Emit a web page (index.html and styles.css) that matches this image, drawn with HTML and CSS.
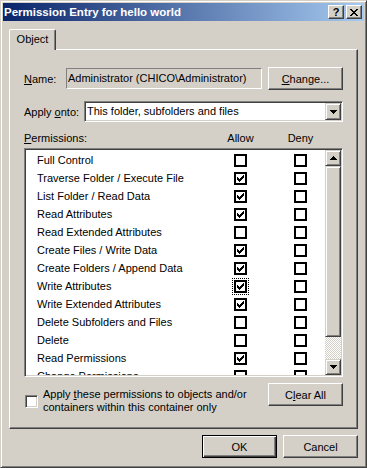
FILE: index.html
```html
<!DOCTYPE html>
<html lang="en">
<head>
  <meta charset="UTF-8">
  <title>Permission Entry for hello world</title>
  <link rel="stylesheet" href="styles.css">
</head>
<body>
  <div class="window">
    <div class="titlebar">
      <span class="title">Permission Entry for hello world</span>
      <span class="tbtn help">?</span>
      <span class="tbtn close">
        <svg width="8" height="7" viewBox="0 0 8 7" shape-rendering="crispEdges"><path d="M0 0h2v1h-2z M6 0h2v1h-2z M1 1h2v1h-2z M5 1h2v1h-2z M2 2h4v1h-4z M3 3h2v1h-2z M2 4h4v1h-4z M1 5h2v1h-2z M5 5h2v1h-2z M0 6h2v1h-2z M6 6h2v1h-2z" fill="#000"/></svg>
      </span>
    </div>

    <div class="tabs"><span class="tab">Object</span></div>

    <div class="panel">
      <div class="row name-row">
        <span class="lbl"><u>N</u>ame:</span>
        <div class="field">Administrator (CHICO\Administrator)</div>
        <button class="btn"><u>C</u>hange...</button>
      </div>

      <div class="row apply-row">
        <span class="lbl">Apply <u>o</u>nto:</span>
        <div class="select">
          <span class="value">This folder, subfolders and files</span>
          <span class="arrow-btn">
            <svg width="7" height="4" viewBox="0 0 7 4" shape-rendering="crispEdges"><path d="M0 0h7v1h-7z M1 1h5v1h-5z M2 2h3v1h-3z M3 3h1v1h-1z" fill="#000"/></svg>
          </span>
        </div>
      </div>

      <div class="perm-head">
        <span class="lbl"><u>P</u>ermissions:</span>
        <span class="col">Allow</span>
        <span class="col">Deny</span>
      </div>

      <div class="listbox">
        <div class="rows">
          <div class="perm"><span class="name">Full Control</span><span class="chk"></span><span class="chk"></span></div>
          <div class="perm"><span class="name">Traverse Folder / Execute File</span><span class="chk on"></span><span class="chk"></span></div>
          <div class="perm"><span class="name">List Folder / Read Data</span><span class="chk on"></span><span class="chk"></span></div>
          <div class="perm"><span class="name">Read Attributes</span><span class="chk on"></span><span class="chk"></span></div>
          <div class="perm"><span class="name">Read Extended Attributes</span><span class="chk"></span><span class="chk"></span></div>
          <div class="perm"><span class="name">Create Files / Write Data</span><span class="chk on"></span><span class="chk"></span></div>
          <div class="perm"><span class="name">Create Folders / Append Data</span><span class="chk on"></span><span class="chk"></span></div>
          <div class="perm"><span class="name">Write Attributes</span><span class="chk on focus"></span><span class="chk"></span></div>
          <div class="perm"><span class="name">Write Extended Attributes</span><span class="chk on"></span><span class="chk"></span></div>
          <div class="perm"><span class="name">Delete Subfolders and Files</span><span class="chk"></span><span class="chk"></span></div>
          <div class="perm"><span class="name">Delete</span><span class="chk"></span><span class="chk"></span></div>
          <div class="perm"><span class="name">Read Permissions</span><span class="chk on"></span><span class="chk"></span></div>
          <div class="perm"><span class="name">Change Permissions</span><span class="chk"></span><span class="chk"></span></div>
        </div>
        <div class="scrollbar">
          <span class="arrow-btn sb-btn">
            <svg width="7" height="4" viewBox="0 0 7 4" shape-rendering="crispEdges"><path d="M3 0h1v1h-1z M2 1h3v1h-3z M1 2h5v1h-5z M0 3h7v1h-7z" fill="#000"/></svg>
          </span>
          <span class="thumb"></span>
          <span class="track"></span>
          <span class="arrow-btn sb-btn">
            <svg width="7" height="4" viewBox="0 0 7 4" shape-rendering="crispEdges"><path d="M0 0h7v1h-7z M1 1h5v1h-5z M2 2h3v1h-3z M3 3h1v1h-1z" fill="#000"/></svg>
          </span>
        </div>
      </div>

      <div class="bottom-row">
        <div class="apply-child">
          <span class="box"></span>
          <span class="text">Apply <u>t</u>hese permissions to objects and/or<br>containers within this container only</span>
        </div>
        <button class="btn">C<u>l</u>ear All</button>
      </div>
    </div>

    <div class="actions">
      <button class="btn default">OK</button>
      <button class="btn">Cancel</button>
    </div>
  </div>
</body>
</html>
```

FILE: styles.css
```css
body {
  margin: 0;
  font-family: 'Liberation Sans', Arial, sans-serif;
  font-size: 11px;
  color: #000;
  background: #d4d0c8;
}
u { text-decoration-thickness: 1px; text-underline-offset: 1px; }

.window {
  box-sizing: border-box;
  width: 367px;
  height: 468px;
  padding: 2px;
  background: #d4d0c8;
  border: 1px solid;
  border-color: #d4d0c8 #404040 #404040 #d4d0c8;
  box-shadow: inset 1px 1px #fff, inset -1px -1px #808080;
}

/* title bar */
.titlebar {
  display: flex;
  align-items: center;
  height: 18px;
  padding: 0 2px 0 1px;
  background: linear-gradient(to right, #0a246a, #a6caf0);
  color: #fff;
}
.title { flex: 1; font-weight: bold; font-size: 11.5px; white-space: nowrap; }
.tbtn {
  box-sizing: border-box;
  display: flex;
  align-items: center;
  justify-content: center;
  width: 16px;
  height: 14px;
  background: #d4d0c8;
  color: #000;
  font-weight: bold;
  font-size: 11px;
  border: 1px solid;
  border-color: #fff #404040 #404040 #fff;
  box-shadow: inset -1px -1px #808080;
}
.tbtn + .tbtn { margin-left: 2px; }
.close svg { margin-left: 0; }

/* tab */
.tabs { display: flex; margin: 8px 0 0 6px; }
.tab {
  position: relative;
  z-index: 1;
  box-sizing: border-box;
  width: 47px;
  height: 21px;
  margin-bottom: -1px;
  padding-top: 3px;
  line-height: 13px;
  text-align: center;
  background: #d4d0c8;
  border: 1px solid;
  border-bottom: none;
  border-color: #fff #404040 #404040 #fff;
  border-radius: 2px 2px 0 0;
  box-shadow: inset -1px 0 #808080;
}

.panel {
  box-sizing: border-box;
  width: 349px;
  height: 380px;
  margin-left: 6px;
  padding: 17px 14px 0;
  border: 1px solid;
  border-color: #fff #404040 #404040 #fff;
  box-shadow: inset -1px -1px #808080;
}

.row { display: flex; align-items: center; }
.lbl { flex: none; white-space: nowrap; }
.name-row { height: 23px; }
.name-row .lbl { width: 42px; }
.apply-row { height: 21px; margin-top: 11px; }
.apply-row .lbl { width: 60px; }

.field {
  box-sizing: border-box;
  width: 196px;
  height: 21px;
  padding: 0 1px;
  line-height: 19px;
  white-space: nowrap;
  overflow: hidden;
  border: 1px solid;
  border-color: #808080 #fff #fff #808080;
}

.btn {
  box-sizing: border-box;
  flex: none;
  width: 75px;
  height: 23px;
  padding: 0;
  font: inherit;
  color: #000;
  background: #d4d0c8;
  border: 1px solid;
  border-color: #fff #404040 #404040 #fff;
  box-shadow: inset -1px -1px #808080;
}
.name-row .btn { margin-left: 6px; }
.btn.default {
  border-color: #000;
  box-shadow: inset 1px 1px #fff, inset -1px -1px #404040, inset -2px -2px #808080;
}

.select {
  box-sizing: border-box;
  display: flex;
  width: 259px;
  height: 21px;
  padding: 1px;
  background: #fff;
  border: 1px solid;
  border-color: #808080 #fff #fff #808080;
  box-shadow: inset 1px 1px #404040, inset -1px -1px #d4d0c8;
}
.select .value { flex: 1; padding-left: 1px; line-height: 17px; white-space: nowrap; }

.arrow-btn {
  box-sizing: border-box;
  display: flex;
  align-items: center;
  justify-content: center;
  width: 16px;
  height: 17px;
  background: #d4d0c8;
  border: 1px solid;
  border-color: #d4d0c8 #404040 #404040 #d4d0c8;
  box-shadow: inset 1px 1px #fff, inset -1px -1px #808080;
}

/* permissions list */
.perm-head { display: flex; margin-top: 10px; line-height: 13px; }
.perm-head .lbl { width: 194px; }
.col { width: 45px; text-align: center; }
.col + .col { margin-left: 15px; }

.listbox {
  box-sizing: border-box;
  display: flex;
  height: 229px;
  margin-top: 3px;
  padding: 1px;
  background: #fff;
  border: 1px solid;
  border-color: #808080 #fff #fff #808080;
  box-shadow: inset 1px 1px #404040, inset -1px -1px #d4d0c8;
}
.rows { flex: 1; overflow: hidden; padding-top: 1px; }
.perm { display: flex; align-items: center; height: 18px; }
.perm .name { flex: none; width: 197px; padding-left: 11px; white-space: nowrap; }
.chk {
  box-sizing: border-box;
  flex: none;
  width: 13px;
  height: 13px;
  background: #fff;
  border: 2px solid #000;
}
.chk + .chk { margin-left: 47px; }
.chk.on {
  background: #fff url("data:image/svg+xml,%3Csvg xmlns='http://www.w3.org/2000/svg' width='9' height='9' shape-rendering='crispEdges'%3E%3Cpath d='M7 1h1v1h-1z M6 2h2v1h-2z M1 3h1v1h-1z M5 3h3v1h-3z M1 4h2v1h-2z M4 4h3v1h-3z M1 5h5v1h-5z M2 6h3v1h-3z M3 7h1v1h-1z' fill='%23000'/%3E%3C/svg%3E") no-repeat;
}
.chk.focus { outline: 1px dotted #000; outline-offset: 1px; }

.scrollbar { display: flex; flex-direction: column; width: 16px; flex: none; }
.sb-btn { height: 16px; }
.thumb {
  box-sizing: border-box;
  height: 171px;
  background: #d4d0c8;
  border: 1px solid;
  border-color: #d4d0c8 #404040 #404040 #d4d0c8;
  box-shadow: inset 1px 1px #fff, inset -1px -1px #808080;
}
.track {
  flex: 1;
  background: repeating-conic-gradient(#fff 0 25%, #d4d0c8 0 50%) 0 0 / 2px 2px;
}

.bottom-row { display: flex; margin-top: 6px; }
.apply-child { display: flex; align-items: center; flex: 1; margin-top: 5px; line-height: 13px; }
.apply-child .box {
  box-sizing: border-box;
  width: 13px;
  height: 13px;
  margin-left: 1px;
  background: #fff;
  border: 1px solid;
  border-color: #808080 #fff #fff #808080;
  box-shadow: inset 1px 1px #404040, inset -1px -1px #d4d0c8;
}
.apply-child .text { margin-left: 5px; }

.actions {
  display: flex;
  justify-content: flex-end;
  gap: 6px;
  margin-top: 6px;
  padding-right: 6px;
}
```
